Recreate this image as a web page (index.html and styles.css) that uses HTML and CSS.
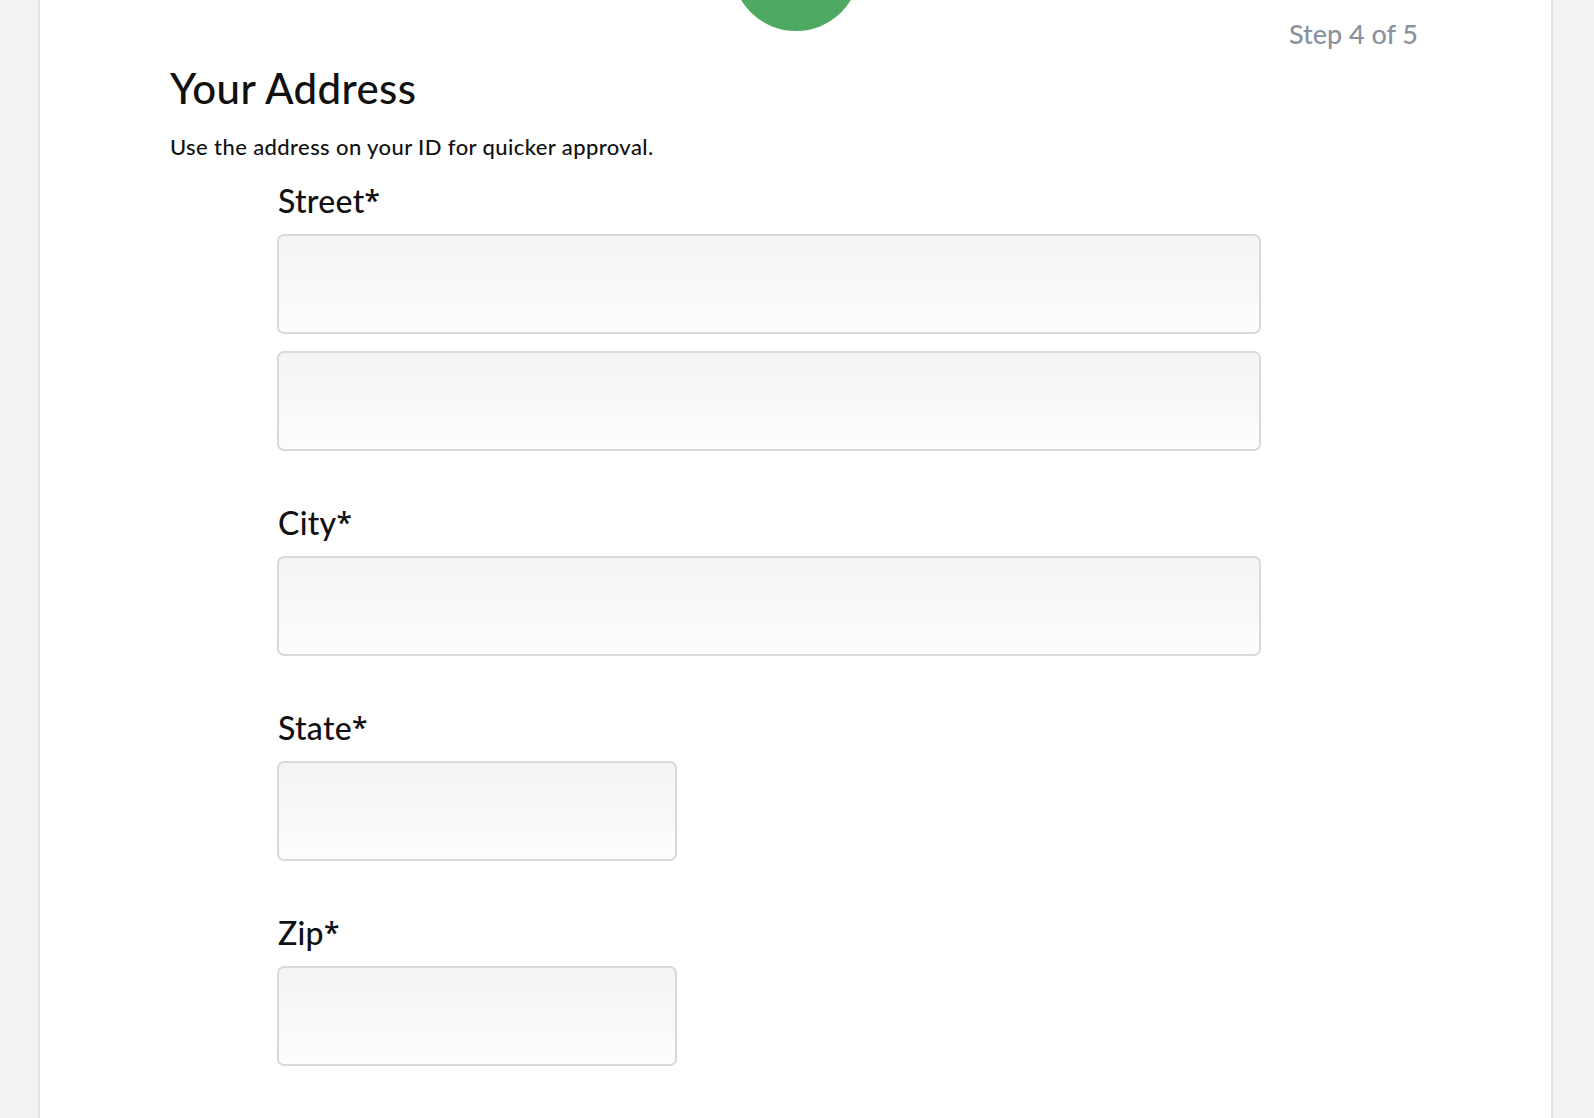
FILE: index.html
```html
<!DOCTYPE html>
<html lang="en">
<head>
<meta charset="utf-8">
<title>Your Address</title>
<link rel="stylesheet" href="styles.css">
</head>
<body>
<main class="card">
  <header class="card-head">
    <div class="head-side"></div>
    <div class="badge"></div>
    <div class="step">Step 4 of 5</div>
  </header>
  <section class="intro">
    <h1 class="title">Your Address</h1>
    <p class="subtitle">Use the address on your ID for quicker approval.</p>
  </section>
  <form class="fields">
    <div class="field">
      <label class="label" for="street1">Street<span class="req">*</span></label>
      <input class="input wide" id="street1" type="text">
      <input class="input wide second" id="street2" type="text">
    </div>
    <div class="field">
      <label class="label" for="city">City<span class="req">*</span></label>
      <input class="input wide" id="city" type="text">
    </div>
    <div class="field">
      <label class="label" for="state">State<span class="req">*</span></label>
      <input class="input narrow" id="state" type="text">
    </div>
    <div class="field">
      <label class="label" for="zip">Zip<span class="req">*</span></label>
      <input class="input narrow" id="zip" type="text">
    </div>
  </form>
</main>
</body>
</html>
```
FILE: styles.css
```css
html, body {
  margin: 0;
  padding: 0;
}
body {
  background: #f1f2f4;
  font-family: Lato, "Liberation Sans", sans-serif;
  color: #111;
  overflow: hidden;
}
.card {
  box-sizing: border-box;
  margin-left: 38px;
  width: 1515px;
  min-height: 1118px;
  background: #fff;
  border-left: 2px solid #e1e2e4;
  border-right: 2px solid #e1e2e4;
  padding: 0 133px 0 130px;
}
.card-head {
  display: grid;
  grid-template-columns: 1fr 128px 1fr;
  align-items: start;
  height: 51px;
}
.badge {
  width: 128px;
  height: 128px;
  margin-top: -97px;
  margin-left: 2px;
  border-radius: 50%;
  background: #4ea962;
}
.step {
  justify-self: end;
  margin-top: 17px;
  font-size: 27px;
  line-height: 34px;
  font-weight: 500;
  color: #8a929f;
}
.intro {
  padding-top: 13px;
}
.title {
  margin: 0;
  font-size: 42px;
  line-height: 48px;
  font-weight: 500;
  letter-spacing: 0.4px;
  color: #111;
}
.subtitle {
  margin: 23px 0 0;
  font-size: 22px;
  line-height: 24px;
  font-weight: 500;
  letter-spacing: 0.4px;
  color: #111;
}
.fields {
  display: flex;
  flex-direction: column;
  gap: 53px;
  margin: 23px 0 0 107px;
}
.field {
  display: flex;
  flex-direction: column;
  align-items: flex-start;
}
.label {
  font-size: 32px;
  line-height: 36px;
  font-weight: 500;
  letter-spacing: 0.3px;
  margin: 0 0 15px 1px;
  color: #111;
}
.req {
  font-family: "Open Sans", Lato, sans-serif;
  font-weight: 600;
  font-size: 28px;
  vertical-align: 2px;
}
.input {
  box-sizing: border-box;
  display: block;
  height: 100px;
  margin: 0;
  border: 2px solid #d9d9d9;
  border-radius: 7px;
  background: linear-gradient(#f4f4f4, #fdfdfd);
  outline: none;
}
.wide {
  width: 984px;
}
.narrow {
  width: 400px;
}
.second {
  margin-top: 17px;
}
```
